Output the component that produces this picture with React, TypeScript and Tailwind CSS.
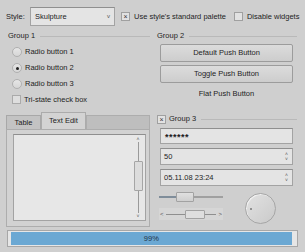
import React from 'react'

// Skulpture-ish palette
const FIELD = 'border border-[#a3a3a3] border-t-[#8f8f8f] bg-[#e4e4e4]'
const BUTTON =
  'flex items-center justify-center border border-[#9c9c9c] bg-gradient-to-b from-[#dcdcdc] to-[#cdcdcd] rounded-[2px]'

function GroupTitle({ children, lead }: { children: React.ReactNode; lead?: React.ReactNode }) {
  return (
    <div className="flex h-[10px] items-center gap-[3px] pl-[2px]">
      {lead}
      <span className="whitespace-nowrap">{children}</span>
      <div className="ml-[2px] h-px flex-1 bg-[#b9b9b9]" />
    </div>
  )
}

function CheckBox({ checked }: { checked?: boolean }) {
  return (
    <span className="flex h-[9px] w-[9px] shrink-0 items-center justify-center border border-[#a0a0a0] bg-[#e2e2e2] text-[7px] leading-none text-[#333]">
      {checked ? '×' : ''}
    </span>
  )
}

function Radio({ label, checked }: { label: string; checked?: boolean }) {
  return (
    <div className="flex h-[16px] items-center gap-[3px] pl-[6px]">
      <span className="flex h-[10px] w-[10px] items-center justify-center rounded-full border border-[#b0b0b0] bg-gradient-to-b from-[#e6e6e6] to-[#d6d6d6]">
        {checked ? <span className="h-[3px] w-[3px] rounded-full bg-[#222]" /> : null}
      </span>
      <span>{label}</span>
    </div>
  )
}

function SpinArrows() {
  return (
    <div className="flex w-[9px] flex-col items-center text-[5px] leading-[5px] text-[#555]">
      <span>˄</span>
      <span>˅</span>
    </div>
  )
}

export default function App() {
  return (
    <div className="h-[252px] w-[305px] overflow-hidden bg-[#cfcfcf] pt-[7px] font-['Liberation_Sans',Arial,sans-serif] text-[7.5px] text-[#1e1e1e]">
      {/* top row */}
      <div className="flex h-[19px] items-center pl-[6px]">
        <span className="w-[24px]">Style:</span>
        <div className={`${FIELD} flex h-[19px] w-[85px] items-center justify-between pl-[4px] pr-[4px]`}>
          <span>Skulpture</span>
          <span className="text-[6px] text-[#555]">v</span>
        </div>
        <div className="ml-[6px] flex items-center gap-[4px]">
          <CheckBox checked />
          <span className="whitespace-nowrap">Use style's standard palette</span>
        </div>
        <div className="ml-[8px] flex items-center gap-[4px]">
          <CheckBox />
          <span className="whitespace-nowrap">Disable widgets</span>
        </div>
      </div>

      {/* main two columns */}
      <div className="mt-[5px] flex gap-[5px] pl-[6px] pr-[8px]">
        {/* left */}
        <div className="flex w-[144px] flex-col">
          <GroupTitle>Group 1</GroupTitle>
          <div className="mt-[3px] flex flex-col">
            <Radio label="Radio button 1" />
            <Radio label="Radio button 2" checked />
            <Radio label="Radio button 3" />
            <div className="flex h-[15px] items-center gap-[3px] pl-[6px]">
              <span className="h-[9px] w-[9px] border border-[#aaa] bg-[#dedede]" />
              <span>Tri-state check box</span>
            </div>
          </div>

          {/* tabs */}
          <div className="mt-[5px] flex h-[17px] items-end">
            <div className="flex h-[14px] w-[35px] items-center justify-center border border-b-0 border-[#a8a8a8] bg-[#c3c3c3]">
              Table
            </div>
            <div className="flex h-[17px] w-[45px] items-center justify-center border border-b-0 border-[#ababab] bg-[#d3d3d3]">
              Text Edit
            </div>
            <div className="h-[14px] flex-1 border border-b-0 border-[#adadad] bg-[#bebebe]" />
          </div>
          <div className="flex h-[98px] border border-[#adadad] bg-[#d2d2d2] pb-[5px] pl-[6px] pr-[3px] pt-[4px]">
            <div className={`${FIELD} flex flex-1 justify-end bg-[#e7e7e7] py-[1px] pr-[2px]`}>
              {/* vertical scrollbar */}
              <div className="flex w-[10px] flex-col items-center text-[5px] leading-[6px] text-[#555]">
                <span>˄</span>
                <div className="flex flex-1 flex-col items-center">
                  <div className="h-[19px] w-px bg-[#9a9a9a]" />
                  <div className="h-[30px] w-[9px] rounded-[1px] border border-[#a5a5a5] bg-[#dcdcdc]" />
                  <div className="w-px flex-1 bg-[#9a9a9a]" />
                </div>
                <span>˅</span>
              </div>
            </div>
          </div>
        </div>

        {/* right */}
        <div className="flex flex-1 flex-col">
          <GroupTitle>Group 2</GroupTitle>
          <div className="mt-[3px] flex flex-col pl-[5px] pr-[4px]">
            <div className={`${BUTTON} h-[18px]`}>Default Push Button</div>
            <div className={`${BUTTON} mt-[3px] h-[18px]`}>Toggle Push Button</div>
            <div className="mt-[3px] flex h-[16px] items-center justify-center">Flat Push Button</div>
          </div>

          <div className="mt-[12px]">
            <GroupTitle lead={<CheckBox checked />}>Group 3</GroupTitle>
          </div>
          <div className="mt-[4px] flex flex-col gap-[4px] pl-[5px] pr-[4px]">
            <div className={`${FIELD} flex h-[16px] items-center pl-[4px] pt-[3px] text-[9px] font-bold leading-none tracking-[0.5px]`}>
              ******
            </div>
            <div className={`${FIELD} flex h-[17px] items-center justify-between pl-[3px] pr-[1px]`}>
              <span>50</span>
              <SpinArrows />
            </div>
            <div className={`${FIELD} flex h-[17px] items-center justify-between pl-[3px] pr-[1px]`}>
              <span>05.11.08 23:24</span>
              <SpinArrows />
            </div>
          </div>

          <div className="mt-[5px] flex pl-[4px]">
            <div className="flex w-[64px] flex-col">
              {/* slider */}
              <div className="flex h-[12px] items-center">
                <div className="h-[2px] w-[17px] bg-[#7f8d9a]" />
                <div className="h-[10px] w-[18px] rounded-[1px] border border-[#a2a2a2] bg-gradient-to-b from-[#e0e0e0] to-[#cfcfcf]" />
                <div className="h-[2px] flex-1 bg-[#a0a0a0]" />
              </div>
              {/* horizontal scrollbar */}
              <div className="mt-[5px] flex h-[12px] items-center bg-[#d6d6d6] px-[1px] text-[6px] text-[#555]">
                <span className="w-[6px]">&lt;</span>
                <div className="h-px w-[19px] bg-[#8f8f8f]" />
                <div className="h-[9px] w-[20px] rounded-[1px] border border-[#a2a2a2] bg-[#dedede]" />
                <div className="h-px flex-1 bg-[#8f8f8f]" />
                <span className="w-[6px] text-right">&gt;</span>
              </div>
            </div>
            <div className="flex flex-1 items-center justify-center pt-[2px]">
              <div className="relative h-[31px] w-[31px] rounded-full border border-[#a6a6a6] bg-gradient-to-br from-[#e2e2e2] to-[#cacaca] shadow-[inset_1px_1px_0_#f0f0f0]">
                <span className="absolute left-[4px] top-[14px] h-[2px] w-[2px] rounded-full bg-[#777]" />
              </div>
            </div>
          </div>
        </div>
      </div>

      {/* progress bar */}
      <div className="ml-[7px] mt-[3px] flex h-[17px] w-[291px] border border-[#a7a7a7] bg-[#e6e6e6] p-[1px] pl-[3px]">
        <div className="flex h-full w-[98.5%] items-center justify-center bg-[#6ba8d3] text-[#1f3347]">
          99%
        </div>
      </div>
    </div>
  )
}
